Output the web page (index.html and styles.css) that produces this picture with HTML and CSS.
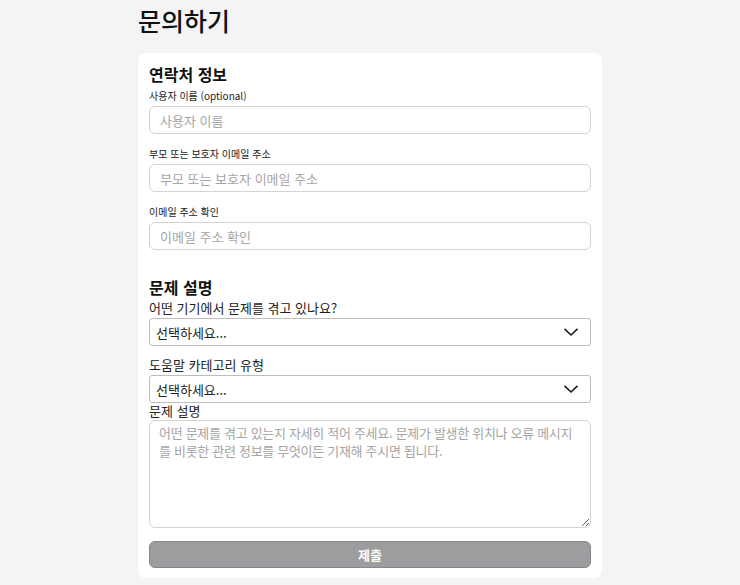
FILE: index.html
```html
<!DOCTYPE html>
<html lang="ko">
<head>
<meta charset="utf-8">
<title>문의하기</title>
<link rel="stylesheet" href="styles.css">
</head>
<body>
<main class="page">
  <h1 class="title">문의하기</h1>
  <form class="card">
    <h2 class="section-title">연락처 정보</h2>
    <div class="field">
      <label class="small-label">사용자 이름 (optional)</label>
      <input class="text-input" type="text" placeholder="사용자 이름">
    </div>
    <div class="field">
      <label class="small-label">부모 또는 보호자 이메일 주소</label>
      <input class="text-input" type="email" placeholder="부모 또는 보호자 이메일 주소">
    </div>
    <div class="field">
      <label class="small-label">이메일 주소 확인</label>
      <input class="text-input" type="email" placeholder="이메일 주소 확인">
    </div>

    <h2 class="section-title second">문제 설명</h2>
    <label class="label">어떤 기기에서 문제를 겪고 있나요?</label>
    <div class="select-wrap">
      <select class="select"><option>선택하세요...</option></select>
      <svg class="chevron" width="16" height="10" viewBox="0 0 16 10"><path d="M1.5 1.8 L8 8 L14.5 1.8" fill="none" stroke="#1a1a1a" stroke-width="1.6"/></svg>
    </div>
    <label class="label spaced">도움말 카테고리 유형</label>
    <div class="select-wrap">
      <select class="select"><option>선택하세요...</option></select>
      <svg class="chevron" width="16" height="10" viewBox="0 0 16 10"><path d="M1.5 1.8 L8 8 L14.5 1.8" fill="none" stroke="#1a1a1a" stroke-width="1.6"/></svg>
    </div>
    <label class="label tight">문제 설명</label>
    <textarea class="textarea" placeholder="어떤 문제를 겪고 있는지 자세히 적어 주세요. 문제가 발생한 위치나 오류 메시지를 비롯한 관련 정보를 무엇이든 기재해 주시면 됩니다."></textarea>
    <button class="submit" type="button">제출</button>
  </form>
</main>
</body>
</html>
```

FILE: styles.css
```css
* { box-sizing: border-box; }
html, body { margin: 0; padding: 0; }
body {
  background: #f3f4f6;
  font-family: "Noto Sans CJK KR", "Noto Sans", sans-serif;
  color: #111;
}
.page {
  width: 464px;
  margin: 0 auto;
  padding-top: 2px;
}
.title {
  margin: 0 0 15px 0;
  font-size: 25px;
  line-height: 36px;
  font-weight: 500;
  color: #111;
}
.card {
  background: #fff;
  border-radius: 8px;
  padding: 10px 11px 10px 11px;
  display: flex;
  flex-direction: column;
}
.section-title {
  margin: 0;
  font-size: 16px;
  line-height: 22px;
  font-weight: 700;
  color: #111;
}
.section-title.second { margin-top: 26px; }
.field {
  display: flex;
  flex-direction: column;
  margin-top: 4px;
}
.field + .field { margin-top: 13px; }
.small-label {
  font-size: 10px;
  line-height: 14px;
  color: #222;
  margin-bottom: 3px;
}
.text-input {
  height: 28px;
  border: 1px solid #d4d4d4;
  border-radius: 6px;
  padding: 0 10px;
  font-family: inherit;
  font-size: 13px;
  color: #222;
  background: #fff;
  outline: none;
}
.text-input::placeholder { color: #a5a5a5; }
.label {
  font-size: 13px;
  line-height: 18px;
  color: #222;
  margin-top: 1px;
}
.label.spaced { margin-top: 10px; }
.label.tight { margin-top: 0; line-height: 16px; }
.select-wrap {
  position: relative;
  margin-top: 1px;
}
.select {
  width: 100%;
  height: 28px;
  -webkit-appearance: none;
  appearance: none;
  border: 1px solid #bdbdbd;
  border-radius: 3px;
  background: #fff;
  padding: 0 6px;
  font-family: inherit;
  font-size: 13px;
  color: #222;
  outline: none;
}
.chevron {
  position: absolute;
  right: 12px;
  top: 9px;
  pointer-events: none;
}
.textarea {
  height: 108px;
  margin-top: 1px;
  border: 1px solid #d4d4d4;
  border-radius: 6px;
  padding: 3px 9px;
  font-family: inherit;
  font-size: 13px;
  line-height: 18px;
  letter-spacing: -0.3px;
  color: #222;
  resize: vertical;
  outline: none;
}
.textarea::placeholder { color: #a5a5a5; }
.submit {
  margin-top: 13px;
  height: 27px;
  border: 1px solid #85878a;
  border-radius: 6px;
  background: #9c9d9f;
  color: #fff;
  font-family: inherit;
  font-size: 13px;
  font-weight: 700;
}
```
